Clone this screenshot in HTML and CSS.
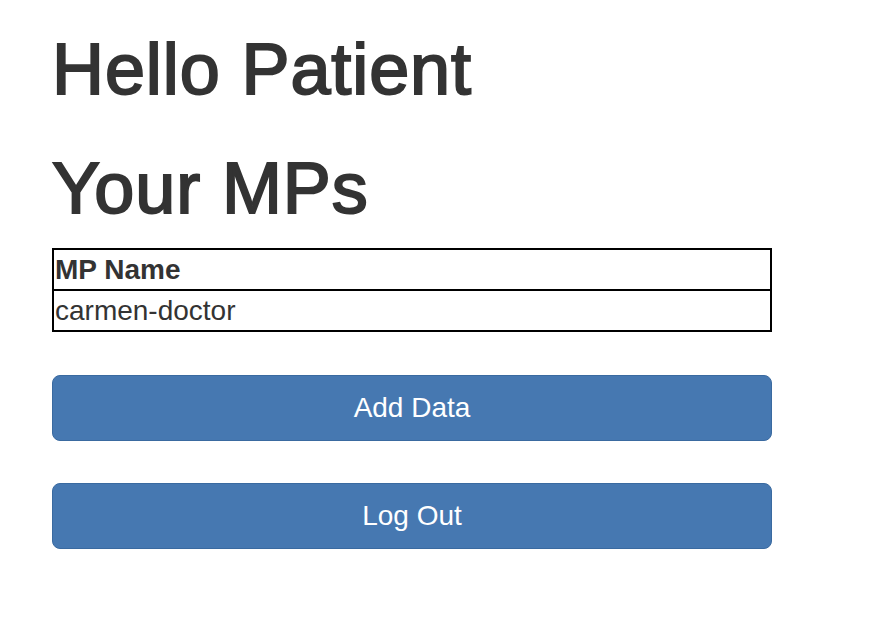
FILE: index.html
```html
<!DOCTYPE html>
<html lang="en">
<head>
<meta charset="utf-8">
<title>Your MPs</title>
<link rel="stylesheet" href="styles.css">
</head>
<body>
<main class="container">
  <h1 class="title">Hello Patient</h1>
  <h1 class="title title-second">Your MPs</h1>
  <table class="mp-table">
    <thead>
      <tr><th>MP Name</th></tr>
    </thead>
    <tbody>
      <tr><td>carmen-doctor</td></tr>
    </tbody>
  </table>
  <div class="actions">
    <button class="btn" type="button">Add Data</button>
    <button class="btn" type="button">Log Out</button>
  </div>
</main>
</body>
</html>
```

FILE: styles.css
```css
html, body {
  margin: 0;
  padding: 0;
  background: #fff;
}

body {
  font-family: "Liberation Sans", Helvetica, Arial, sans-serif;
  color: #333;
}

.container {
  width: 720px;
  padding: 30px 0 0 52px;
}

.title {
  margin: 0 0 20px;
  font-size: 72px;
  line-height: 79px;
  font-weight: 400;
  letter-spacing: 0.9px;
  color: #333;
  -webkit-text-stroke: 2px #333;
}

.title-second {
  margin-top: 40px;
}

.mp-table {
  width: 720px;
  border-collapse: collapse;
  border: 2px solid #000;
  font-size: 28px;
  line-height: 39px;
}

.mp-table th,
.mp-table td {
  border: 2px solid #000;
  padding: 0 0 0 1px;
  text-align: left;
}

.mp-table th {
  font-weight: 700;
}

.actions {
  display: flex;
  flex-direction: column;
  gap: 42px;
  margin-top: 43px;
}

.btn {
  display: block;
  width: 720px;
  padding: 12px 0;
  border: 1px solid #3a6aa0;
  border-radius: 8px;
  background: #4678b1;
  color: #fff;
  font-family: "Liberation Sans", Helvetica, Arial, sans-serif;
  font-size: 28px;
  line-height: 40px;
  text-align: center;
  cursor: pointer;
}
```
